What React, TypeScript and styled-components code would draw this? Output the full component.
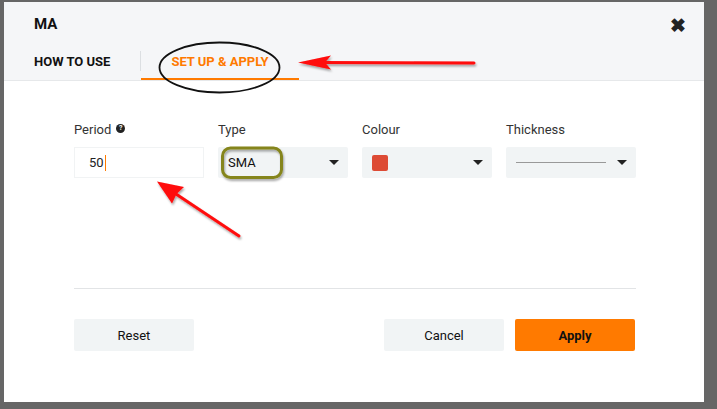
import styled, { createGlobalStyle } from 'styled-components';

const GlobalStyle = createGlobalStyle`
  html, body {
    margin: 0;
    padding: 0;
    background: #666666;
  }
  body {
    font-family: Roboto, "Liberation Sans", sans-serif;
    color: #222;
  }
`

const Page = styled.div`
  position: relative;
  width: 717px;
  height: 409px;
  padding: 2px 0 0 4px;
  box-sizing: border-box;
  background: #666666;
  overflow: hidden;
`

const Modal = styled.div`
  width: 700px;
  height: 400px;
  background: #fff;
  display: flex;
  flex-direction: column;
`

const Header = styled.div`
  background: #f5f6f8;
  border-bottom: 1px solid #e6e8ea;
`

const TitleRow = styled.div`
  display: flex;
  justify-content: space-between;
  align-items: center;
  height: 40px;
  padding: 4px 18px 0 30px;
  box-sizing: border-box;
`

const Title = styled.div`
  font-size: 15px;
  font-weight: 700;
  color: #111;
`

const Close = styled.div`
  font-size: 19px;
  font-weight: 700;
  color: #222;
  line-height: 1;
  margin-top: 2px;
`

const Tabs = styled.div`
  display: flex;
  align-items: center;
  height: 38px;
`

const Tab = styled.div<{ $active?: boolean }>`
  height: 100%;
  display: flex;
  align-items: center;
  padding: 2px 30px 0;
  box-sizing: border-box;
  font-size: 13px;
  font-weight: 700;
  color: ${(p) => (p.$active ? '#ff7a00' : '#111')};
  border-bottom: 2px solid ${(p) => (p.$active ? '#ff7a00' : 'transparent')};
`

const TabDivider = styled.div`
  width: 1px;
  height: 20px;
  background: #dcdfe2;
`

const Body = styled.div`
  padding: 41px 68px 0 70px;
`

const Fields = styled.div`
  display: grid;
  grid-template-columns: repeat(4, 130px);
  column-gap: 14px;
`

const Field = styled.div`
  display: flex;
  flex-direction: column;
  gap: 9px;
`

const Label = styled.div`
  font-size: 13px;
  line-height: 16px;
  color: #333;
  display: flex;
  align-items: center;
  gap: 5px;
`

const Help = styled.span`
  width: 9px;
  height: 9px;
  border-radius: 50%;
  background: #222;
  color: #fff;
  font-size: 7px;
  font-weight: 700;
  line-height: 9px;
  text-align: center;
  margin-top: -4px;
`

const Input = styled.div`
  height: 31px;
  box-sizing: border-box;
  border: 1px solid #f1f3f4;
  background: #fff;
  display: flex;
  align-items: center;
  padding-left: 14px;
  font-size: 13px;
  color: #222;
`

const Caret = styled.span`
  width: 1px;
  height: 16px;
  background: #ff7a00;
  margin-left: 1px;
`

const Select = styled.div`
  height: 31px;
  box-sizing: border-box;
  background: #f1f4f5;
  border-radius: 2px;
  display: flex;
  align-items: center;
  justify-content: space-between;
  padding: 0 9px 0 10px;
  font-size: 13px;
  color: #111;
`

const Arrow = styled.span`
  width: 0;
  height: 0;
  border-left: 5px solid transparent;
  border-right: 5px solid transparent;
  border-top: 5px solid #222;
  flex-shrink: 0;
`

const Swatch = styled.span<{ $color: string }>`
  width: 16px;
  height: 16px;
  border-radius: 2px;
  background: ${(p) => p.$color};
`

const LineSample = styled.span`
  width: 90px;
  height: 1px;
  background: #999;
`

const Rule = styled.div`
  height: 1px;
  background: #e2e4e6;
  margin-top: 110px;
  width: 562px;
`

const Footer = styled.div`
  display: flex;
  justify-content: space-between;
  margin-top: 30px;
  width: 561px;
`

const Group = styled.div`
  display: flex;
  gap: 11px;
`

const Button = styled.button<{ $primary?: boolean }>`
  width: 120px;
  height: 32px;
  border: none;
  border-radius: 2px;
  font-family: Roboto, "Liberation Sans", sans-serif;
  font-size: 13px;
  font-weight: ${(p) => (p.$primary ? 700 : 400)};
  background: ${(p) => (p.$primary ? '#ff7a00' : '#f1f4f5')};
  color: #111;
`

const Overlay = styled.svg`
  position: absolute;
  left: 0;
  top: 0;
  pointer-events: none;
`

const App = () => {
  return (
    <Page>
      <GlobalStyle />
      <Modal>
        <Header>
          <TitleRow>
            <Title>MA</Title>
            <Close>✖</Close>
          </TitleRow>
          <Tabs>
            <Tab>HOW TO USE</Tab>
            <TabDivider />
            <Tab $active>SET UP &amp; APPLY</Tab>
          </Tabs>
        </Header>
        <Body>
          <Fields>
            <Field>
              <Label>Period <Help>?</Help></Label>
              <Input>50<Caret /></Input>
            </Field>
            <Field>
              <Label>Type</Label>
              <Select>SMA<Arrow /></Select>
            </Field>
            <Field>
              <Label>Colour</Label>
              <Select><Swatch $color="#dd4b35" /><Arrow /></Select>
            </Field>
            <Field>
              <Label>Thickness</Label>
              <Select><LineSample /><Arrow /></Select>
            </Field>
          </Fields>
          <Rule />
          <Footer>
            <Button>Reset</Button>
            <Group>
              <Button>Cancel</Button>
              <Button $primary>Apply</Button>
            </Group>
          </Footer>
        </Body>
      </Modal>

      {/* annotations drawn over the screenshot */}
      <Overlay width="717" height="409" viewBox="0 0 717 409">
        <defs>
          <filter id="sh" x="-20%" y="-20%" width="140%" height="140%">
            <feDropShadow dx="1" dy="2" stdDeviation="1.2" floodColor="#000" floodOpacity="0.35" />
          </filter>
        </defs>
        <ellipse cx="219.5" cy="67.5" rx="60" ry="25" fill="none" stroke="#111" strokeWidth="1.8" />
        <g filter="url(#sh)" fill="#ff0a0a" stroke="none">
          <line x1="474" y1="63" x2="320" y2="62.5" stroke="#ff0a0a" strokeWidth="3" strokeLinecap="round" />
          <path d="M298 62.5 L331 55.5 L325 62.5 L331 69.5 Z" />
          <line x1="239" y1="236" x2="176" y2="194" stroke="#ff0a0a" strokeWidth="3" strokeLinecap="round" />
          <path d="M157 181.5 L184 187 L176.5 194 L172 203.5 Z" />
        </g>
        <rect x="222.5" y="148" width="59" height="29.5" rx="8" fill="none" stroke="#85851c" strokeWidth="3" filter="url(#sh)" />
      </Overlay>
    </Page>
  );
}

export default App;
